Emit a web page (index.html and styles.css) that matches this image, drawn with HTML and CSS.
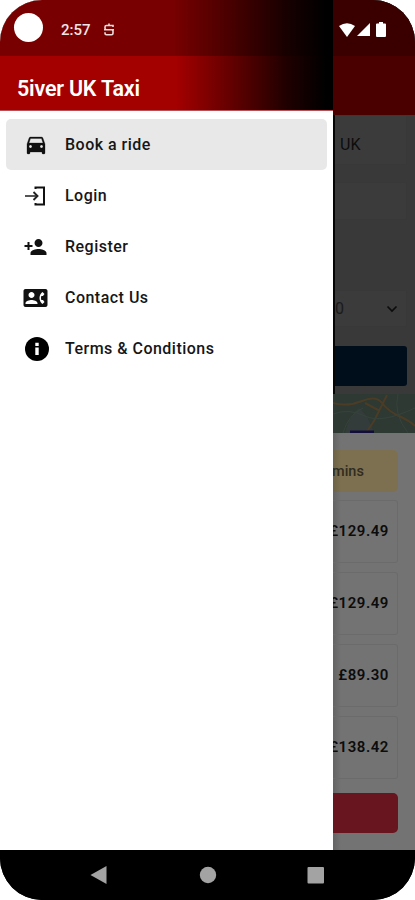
FILE: index.html
```html
<!DOCTYPE html>
<html lang="en">
<head>
<meta charset="utf-8">
<title>5iver UK Taxi</title>
<link rel="stylesheet" href="styles.css">
</head>
<body>
<div class="phone">
  <div class="screen">
    <aside class="drawer">
      <div class="drawer-status">
        <span class="camera"></span>
        <span class="time">2:57</span>
        <svg class="s-icon" viewBox="0 0 12 14"><path d="M10 4V2.500H3.500Q2 2.500 2 4v1.200Q2 6.800 3.500 6.800h5q1.500 0 1.500 1.500v2q0 1.500-1.500 1.500h-5Q2 11.800 2 10.300V9.300M6 .5v2M1 6.800h10" fill="none" stroke="#ecdcdc" stroke-width="1.600"/></svg>
      </div>
      <header class="drawer-head">5iver UK Taxi</header>
      <nav class="menu">
        <a class="item active"><svg viewBox="0 0 24 24"><path d="M18.920 5.010C18.720 4.420 18.160 4 17.500 4h-11c-.66 0-1.210.42-1.420 1.010L3 11v9c0 .55.45 1 1 1h1c.55 0 1-.45 1-1v-1h12v1c0 .55.45 1 1 1h1c.55 0 1-.45 1-1v-9l-2.080-5.990zM6.500 15c-.83 0-1.500-.67-1.500-1.500S5.670 12 6.500 12s1.500.67 1.500 1.500S7.330 15 6.500 15zm11 0c-.83 0-1.500-.67-1.500-1.500s.67-1.500 1.500-1.500 1.500.67 1.500 1.500-.67 1.500-1.500 1.500zM5 10l1.500-4.500h11L19 10H5z" stroke="#111" stroke-width=".3"/></svg><span>Book a ride</span></a>
        <a class="item"><svg viewBox="0 0 24 24"><path d="M11.500 5V3.500h8.500v17h-8.500V19" fill="none" stroke="#111" stroke-width="2"/><path d="M1 12h12" fill="none" stroke="#555" stroke-width="1.900"/><path d="M9.500 8l4 4-4 4" fill="none" stroke="#222" stroke-width="1.900"/></svg><span>Login</span></a>
        <a class="item"><svg class="wide" viewBox="0 0 24 24"><path d="M15 12c2.210 0 4-1.790 4-4s-1.790-4-4-4-4 1.790-4 4 1.790 4 4 4zm-9-2V7H4v3H1v2h3v3h2v-3h3v-2H6zm9 4c-2.670 0-8 1.340-8 4v2h16v-2c0-2.660-5.330-4-8-4z"/></svg><span>Register</span></a>
        <a class="item"><svg class="wide" viewBox="0 0 24 24"><path d="M22 3H2C.9 3 0 3.900 0 5v14c0 1.100.9 2 2 2h20c1.100 0 1.990-.9 1.990-2L24 5c0-1.100-.9-2-2-2zM8 6c1.660 0 3 1.340 3 3s-1.340 3-3 3-3-1.340-3-3 1.340-3 3-3zm6 12H2v-1c0-2 4-3.100 6-3.100s6 1.100 6 3.100v1zm3.850-4h1.640L21 16l-1.990 1.990c-1.310-.98-2.280-2.380-2.730-3.990-.18-.64-.28-1.310-.28-2s.1-1.360.28-2c.45-1.620 1.420-3.010 2.730-3.990L21 8l-1.510 2h-1.640c-.22.63-.35 1.300-.35 2s.13 1.370.35 2z"/></svg><span>Contact Us</span></a>
        <a class="item"><svg class="info" viewBox="0 0 24 24"><circle cx="12" cy="12" r="12"/><path d="M10.300 10.500h3.400V18h-3.400zM10.300 5.700h3.400v3.200h-3.400z" fill="#fff"/></svg><span>Terms &amp; Conditions</span></a>
      </nav>
    </aside>
    <main class="page">
      <div class="page-status">
        <svg class="wifi" viewBox="0 0 16 14"><path d="M0 3Q8-2.500 16 3L8 14z"/></svg>
        <svg class="signal" viewBox="0 0 13 13"><path d="M13 0v13H0z"/></svg>
        <svg class="battery" viewBox="0 0 10 15"><path d="M3 0h4v1.500h2q1 0 1 1V14q0 1-1 1H1q-1 0-1-1V2.500q0-1 1-1h2z"/></svg>
      </div>
      <div class="page-bar"></div>
      <section class="form">
        <div class="field first">UK</div>
        <div class="field second"></div>
        <div class="field third"><span>0</span><svg viewBox="0 0 12 8"><path d="M1.500 1.500L6 6l4.500-4.500" fill="none" stroke="#0c0c0c" stroke-width="1.700"/></svg></div>
        <div class="search"></div>
      </section>
      <svg class="map" viewBox="0 0 82 39"><rect width="82" height="39" fill="#2d3932"/><path d="M26 14q10 8 15 25H12Q16 22 26 14" fill="#333c3a"/><path d="M0 9q15 4 29-2t20 2 17 13 16 10M54 1L41 27l-8 12M47 17l-15-8" fill="none" stroke="#4c3c25" stroke-width="2"/><path d="M0 20q16-6 32 2t50-8M10 39q5-18 20-25M65 0q-5 20 10 39" fill="none" stroke="#36423c"/><path d="M17 36.500h24V39H17z" fill="#110c3b"/></svg>
      <section class="sheet">
        <div class="notice"><span>mins</span></div>
        <div class="quote"><span>£129.49</span></div>
        <div class="quote"><span>£129.49</span></div>
        <div class="quote"><span>£89.30</span></div>
        <div class="quote"><span>£138.42</span></div>
        <div class="cta"></div>
      </section>
    </main>
  </div>
  <footer class="navbar">
    <svg viewBox="0 0 18 20"><path d="M15.500 1v18L-.5 10z"/></svg>
    <svg viewBox="0 0 18 20"><circle cx="9" cy="10" r="8.200"/></svg>
    <svg viewBox="0 0 18 20"><rect x="0.500" y="2" width="16.500" height="16.500" rx="1"/></svg>
  </footer>
</div>
</body>
</html>
```
FILE: styles.css
```css
* { box-sizing: border-box; }
body { margin: 0; background: #fff; font-family: Roboto, "Liberation Sans", sans-serif; }
svg { display: block; flex: none; overflow: visible; }

.phone { width: 415px; height: 900px; border-radius: 42px; overflow: hidden; background: #000; display: flex; flex-direction: column; }
.screen { height: 850px; display: flex; }

.drawer { width: 333px; flex: none; background: #fff; }
.drawer-status { height: 56px; display: flex; align-items: center; padding: 3px 0 0 14px; background: linear-gradient(90deg, #780000 0, #780000 52%, #4c0000 68%, #180000 86%, #000 98%); }
.camera { width: 29px; height: 29px; border-radius: 50%; background: #fff; margin-top: -5px; }
.time { margin-left: 18px; width: 42px; font-size: 15px; font-weight: 500; color: #f0e4e4; }
.s-icon { width: 12px; height: 14px; }
.drawer-head { height: 54px; padding: 11px 0 0 17px; display: flex; align-items: center; font-size: 21.500px; font-weight: 600; letter-spacing: -0.200px; color: #fff; background: linear-gradient(90deg, #a50000 0, #a30000 53%, #650000 69%, #200000 86%, #000 98%); }

.menu { padding: 8px 6px 0; border-top: 1px solid #b95055; }
.item { height: 51px; display: flex; align-items: center; padding-left: 18px; border-radius: 5px; font-size: 16px; font-weight: 500; letter-spacing: 0.480px; color: #161616; }
.active { background: #e8e8e8; }
.item svg { width: 24px; height: 24px; fill: #111; }
.item svg.wide { margin-left: -1px; width: 25px; }
.item svg.info { margin-left: 1px; margin-right: -1px; fill: #000; }
.item span { margin-left: 17px; }

.page { width: 82px; overflow: hidden; background: #393939; }
.page-status { height: 56px; background: #3a0000; display: flex; align-items: center; padding: 3px 0 0 6px; }
.page-status svg { fill: #fff; }
.wifi { width: 16px; height: 14px; }
.signal { width: 13px; height: 13px; margin-left: 2px; }
.battery { width: 10px; height: 15px; margin-left: 6px; }
.page-bar { height: 59px; background: #4b0000; }

.form { height: 279px; border-left: 2px solid #050505; }
.field { width: 72px; background: #3b3b3b; border: 1px solid #383838; border-left: 0; font-size: 16px; color: #0d0d0d; display: flex; align-items: center; }
.first { height: 50px; padding: 8px 0 0 5px; }
.second { margin-top: 17px; height: 38px; }
.third { margin-top: 70px; height: 37px; padding-right: 8px; justify-content: space-between; color: #1a1a1a; }
.third svg { width: 12px; height: 8px; }
.search { margin-top: 19px; width: 72px; height: 40px; border-radius: 0 3px 3px 0; background: #000e1b; }
.map { width: 82px; height: 39px; overflow: hidden; }

.sheet { height: 417px; padding-top: 17px; background: linear-gradient(90deg, #646464, #737373 8px); display: flex; flex-direction: column; }
.notice { width: 65px; height: 42px; border-radius: 0 5px 5px 0; background: linear-gradient(90deg, #6c6246, #7c7050 8px); display: flex; align-items: center; font-size: 14.500px; font-weight: 500; color: #302c20; }
.notice span { margin-left: -1px; }
.quote { width: 65px; height: 63px; flex: none; margin-top: 9px; border: 1px solid #6b6b6b; border-left: 0; border-radius: 0 3px 3px 0; display: flex; align-items: center; justify-content: flex-end; padding: 0 8px 1px 0; font-size: 15px; font-weight: 600; letter-spacing: 0.550px; color: #0c0c0c; }
.notice + .quote { margin-top: 8px; }
.cta { margin-top: 14px; width: 65px; height: 40px; border-radius: 0 5px 5px 0; background: #68151f; }

.navbar { height: 50px; background: #000; display: flex; align-items: center; gap: 90px; padding-left: 91px; }
.navbar svg { width: 18px; height: 20px; fill: #a3a3a3; }
```
